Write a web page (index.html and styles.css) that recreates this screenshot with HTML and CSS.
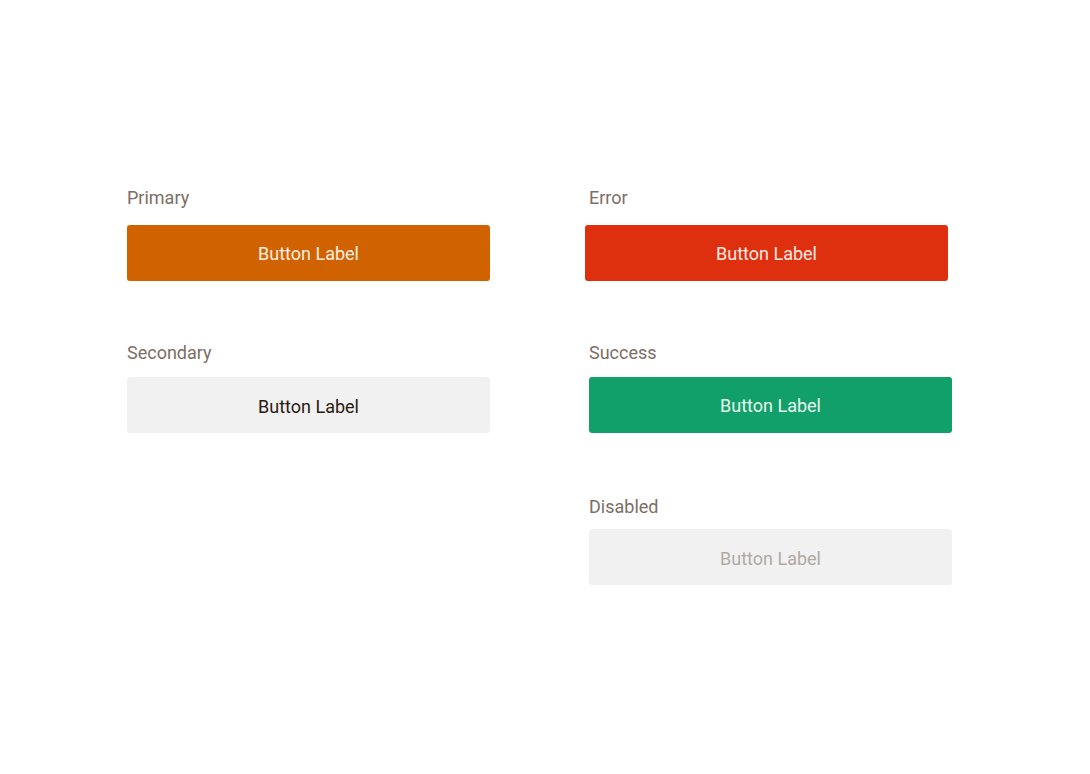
FILE: index.html
```html
<!DOCTYPE html>
<html>
<head>
<meta charset="utf-8">
<link rel="stylesheet" href="styles.css">
</head>
<body>
<main class="board">
  <section class="group row1">
    <div class="label">Primary</div>
    <button class="btn btn-primary">Button Label</button>
  </section>
  <section class="group row1">
    <div class="label">Error</div>
    <button class="btn btn-error">Button Label</button>
  </section>
  <section class="group row2">
    <div class="label">Secondary</div>
    <button class="btn btn-secondary">Button Label</button>
  </section>
  <section class="group row2">
    <div class="label">Success</div>
    <button class="btn btn-success">Button Label</button>
  </section>
  <div class="group empty"></div>
  <section class="group row3">
    <div class="label">Disabled</div>
    <button class="btn btn-disabled" disabled>Button Label</button>
  </section>
</main>
</body>
</html>
```
FILE: styles.css
```css
html, body {
  margin: 0;
  padding: 0;
  background: #ffffff;
}
body {
  font-family: Roboto, "Liberation Sans", sans-serif;
  width: 1090px;
  height: 774px;
}
.board {
  display: grid;
  grid-template-columns: 363px 363px;
  column-gap: 99px;
  padding: 187px 0 0 127px;
}
.group {
  display: flex;
  flex-direction: column;
  align-items: flex-start;
}
.label {
  font-size: 18px;
  line-height: 21px;
  color: #7d6e65;
}
.btn {
  width: 363px;
  height: 56px;
  border: none;
  border-radius: 3px;
  font-family: Roboto, "Liberation Sans", sans-serif;
  font-size: 18px;
  padding: 0;
  cursor: pointer;
}
.row1 .btn { margin-top: 17px; }
.row2 { margin-top: 61px; }
.row2 .btn { margin-top: 14px; }
.row3 { margin-top: 63px; }
.row3 .btn { margin-top: 12px; }
.btn-primary { background: #d06300; color: #fbeee2; }
.btn-error { background: #de300e; color: #fde9e4; margin-left: -4px; }
.btn-secondary { background: #f1f1f1; color: #2b1a10; padding-top: 2px; }
.btn-success { background: #12a06a; color: #e8f7ef; }
.btn-disabled { background: #f1f1f1; color: #b2a9a3; cursor: default; padding-top: 2px; }
```
